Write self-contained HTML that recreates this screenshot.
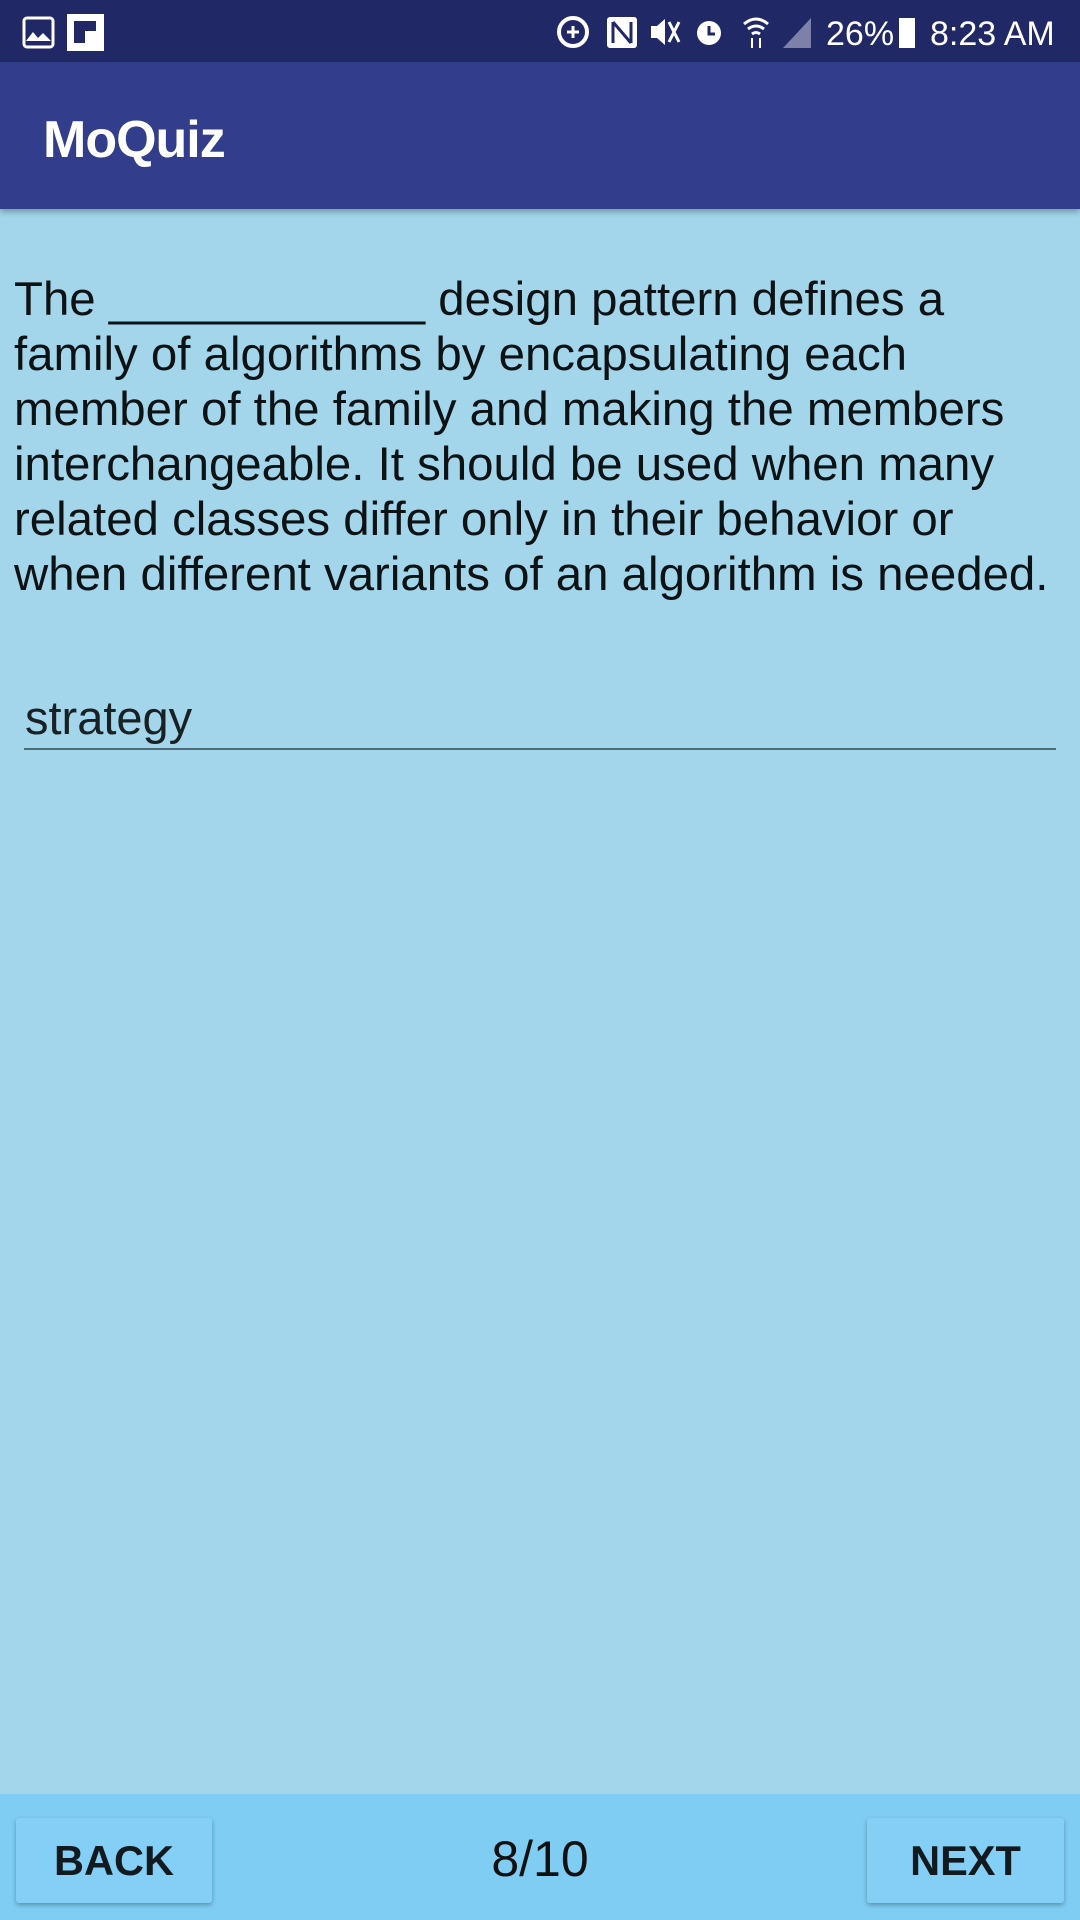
<!DOCTYPE html>
<html><head><meta charset="utf-8"><style>
*{margin:0;padding:0;box-sizing:border-box}
body{width:1080px;height:1920px;background:#a3d6eb;font-family:"Liberation Sans",sans-serif;position:relative;overflow:hidden}
.sb{position:absolute;left:0;top:0;width:1080px;height:62px;background:#202966;color:#fff}
.ab{position:absolute;left:0;top:62px;width:1080px;height:147px;background:#323e8c;box-shadow:0 3px 6px rgba(0,0,0,.3)}
.ab span{position:absolute;left:43px;top:78px;transform:translateY(-50%);font-size:52px;font-weight:bold;color:#fff;letter-spacing:-1px;line-height:1}
.q{position:absolute;left:14px;top:272px;font-size:47.4px;line-height:55px;color:#0d1214;white-space:nowrap}
.inp{position:absolute;left:25px;top:690px;font-size:47px;color:#1a2124}
.line{position:absolute;left:24px;top:748px;width:1032px;height:2px;background:#4a6b78}
.bb{position:absolute;left:0;top:1794px;width:1080px;height:126px;background:#7fcdf3}
.btn{position:absolute;top:1818px;height:85px;background:#84cff6;box-shadow:0 2px 5px rgba(0,0,0,.3);border-radius:3px;font-size:41.5px;font-weight:bold;color:#111a1e;display:flex;align-items:center;justify-content:center}
.pg{position:absolute;left:540px;top:1859px;transform:translate(-50%,-50%);font-size:50px;color:#111}
</style></head><body>
<div class="sb">
 <svg width="1080" height="62" style="position:absolute;left:0;top:0">
  <rect x="24" y="18" width="29" height="29" rx="3" fill="none" stroke="#fff" stroke-width="3"/>
  <path d="M26 41 L33 32 L38 38 L43 33 L51 41 Z" fill="#fff"/>
  <rect x="67" y="14" width="37" height="37" fill="#fff"/>
  <path d="M74 21 H96 V31 H85 V43 H74 Z" fill="#202966"/>
  <circle cx="573" cy="32" r="14" fill="none" stroke="#fff" stroke-width="4"/>
  <path d="M567 32h12M573 26v12" stroke="#fff" stroke-width="3"/>
  <rect x="607" y="17" width="30" height="31" rx="3" fill="#fff"/>
  <path d="M613 22v21M631 22v21M613 22l18 21" stroke="#202966" stroke-width="3" fill="none"/>
  <path d="M651 26h6l8-7v26l-8-7h-6z" fill="#fff"/>
  <path d="M669 22l10 20M679 22l-10 20" stroke="#fff" stroke-width="3"/>
  <circle cx="709" cy="33" r="12" fill="#fff"/>
  <path d="M709 26v8h6" stroke="#202966" stroke-width="3" fill="none"/>
  <path d="M744 24q12-10 24 0M748 29q8-6 16 0M752 34q4-3 8 0" stroke="#fff" stroke-width="3" fill="none"/>
  <path d="M752 38v10M760 48v-10" stroke="#fff" stroke-width="2"/>
  <path d="M783 48 L811 18 V48 Z" fill="#7d80a9"/>
  <text x="826" y="45" font-size="34" fill="#fff" font-family="Liberation Sans">26%</text>
  <rect x="899" y="18" width="16" height="30" fill="#fff"/>
  <text x="930" y="45" font-size="34" fill="#fff" font-family="Liberation Sans">8:23 AM</text>
 </svg>
</div>
<div class="ab"><span>MoQuiz</span></div>
<div class="q">The ____________ design pattern defines a<br>family of algorithms by encapsulating each<br>member of the family and making the members<br>interchangeable. It should be used when many<br>related classes differ only in their behavior or<br>when different variants of an algorithm is needed.</div>
<div class="inp">strategy</div>
<div class="line"></div>
<div class="bb"></div>
<div class="btn" style="left:16px;width:196px">BACK</div>
<div class="pg">8/10</div>
<div class="btn" style="left:867px;width:197px">NEXT</div>
</body></html>
